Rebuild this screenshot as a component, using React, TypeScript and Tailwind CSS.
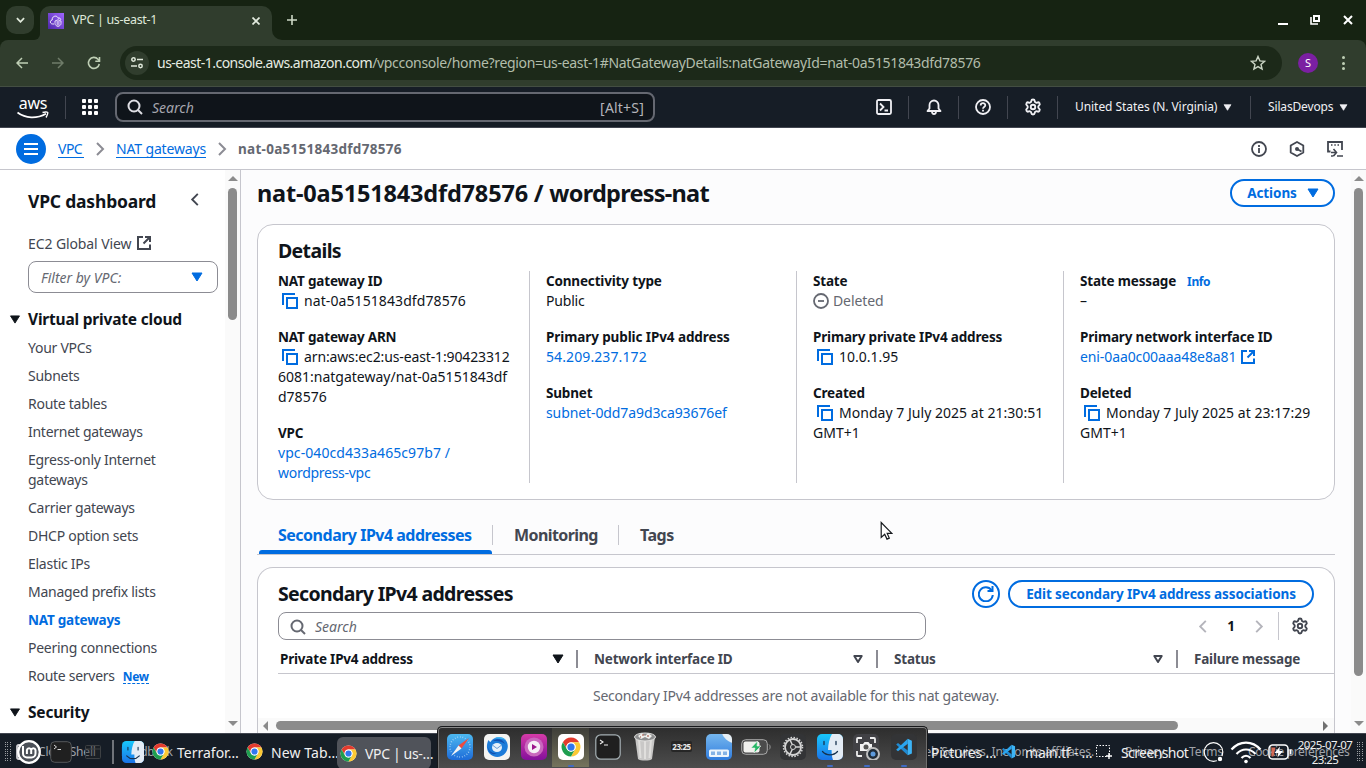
import type { ReactNode } from 'react';
import { Settings } from 'lucide-react';

type IconProps = { className?: string };

const Copy = () => (
  <svg viewBox="0 0 16 16" className="ml-1 mr-1.5 inline-block h-4 w-4 align-[-3px]" fill="none" stroke="#006ce0" strokeWidth="2">
    <path d="M1 12V1h12" />
    <path d="M5 5h10v10H5z" />
  </svg>
);

const External = ({ className = '' }: IconProps) => (
  <svg viewBox="0 0 16 16" className={`h-4 w-4 shrink-0 ${className}`} fill="none" stroke="currentColor" strokeWidth="2">
    <path d="M7 2H2v12h12V9.500" />
    <path d="M9 2h5v5M14 2 7.500 8.500" />
  </svg>
);

const Magnifier = ({ className = '' }: IconProps) => (
  <svg viewBox="0 0 16 16" className={`h-4 w-4 shrink-0 ${className}`} fill="none" stroke="currentColor" strokeWidth="2">
    <circle cx="7" cy="7" r="5.500" />
    <path d="m11 11 4 4" />
  </svg>
);

const Chevron = ({ className = '' }: IconProps) => (
  <svg viewBox="0 0 10 16" className={`shrink-0 ${className}`} fill="none" stroke="currentColor" strokeWidth="2">
    <path d="m2 2 6 6-6 6" />
  </svg>
);

const Caret = ({ className = '' }: IconProps) => (
  <svg viewBox="0 0 12 10" className={`shrink-0 ${className}`} fill="currentColor" stroke="currentColor" strokeWidth="1" strokeLinejoin="round">
    <path d="M1 1h10L6 9z" />
  </svg>
);

const SortIcon = ({ className = '' }: IconProps) => (
  <svg viewBox="0 0 12 10" className={`h-[10px] w-3 shrink-0 ${className}`} fill="none" stroke="#424650" strokeWidth="2" strokeLinejoin="round">
    <path d="M2.300 2h7.400L6 8z" />
  </svg>
);

const ChromeLogo = ({ className = '' }: IconProps) => (
  <svg viewBox="0 0 32 32" className={`shrink-0 ${className}`}>
    <circle cx="16" cy="16" r="15" fill="#fff" />
    <path d="M3 8.500A15 15 0 0 1 29 8.500H16a7.500 7.500 0 0 0-6.500 11.200z" fill="#e33b2e" />
    <path d="M29 8.500A15 15 0 0 1 16 31l6.500-11.200A7.500 7.500 0 0 0 16 8.500z" fill="#fcc934" />
    <path d="M16 31A15 15 0 0 1 3 8.500l6.500 11.200a7.500 7.500 0 0 0 13 0z" fill="#1e9e4f" />
    <circle cx="16" cy="16" r="7.400" fill="#fff" />
    <circle cx="16" cy="16" r="5.800" fill="#3177ee" />
  </svg>
);

const FinderLogo = ({ className = '' }: IconProps) => (
  <svg viewBox="0 0 26 26" className={`shrink-0 ${className}`}>
    <defs>
      <linearGradient id="finderLeft" x1="0" x2="0" y1="0" y2="1">
        <stop offset="0" stopColor="#18c8fb" />
        <stop offset="1" stopColor="#1b73e8" />
      </linearGradient>
    </defs>
    <rect width="26" height="26" rx="5" fill="url(#finderLeft)" />
    <path d="M15 0h6a5 5 0 0 1 5 5v16a5 5 0 0 1-5 5h-5c-1-3-1.400-6-1.400-10H11C11.200 10 12.500 4 15 0z" fill="#e4ecf5" />
    <path d="M7 7.500v3M19 7.500v3M5.500 17.500c4 4.500 11 4.500 15 0" fill="none" stroke="#16324f" strokeWidth="1.300" strokeLinecap="round" />
  </svg>
);

const CodeLogo = ({ className = '' }: IconProps) => (
  <svg viewBox="0 0 24 24" className={`shrink-0 ${className}`}>
    <path d="M17 1v22L1.500 8.500 4 6.500 17 16.500" fill="#1f8ad2" />
    <path d="M17 1 1.500 15.500 4 17.500 17 7.500z" fill="#2aa5ee" />
    <path d="M17 1l5.500 2.500v17L17 23z" fill="#3cb4f6" />
  </svg>
);

const Grip = () => (
  <span className="grid h-[19px] w-[6px] shrink-0 grid-cols-3 gap-[1px]">
    {Array.from({ length: 27 }, (_, i) => (
      <span key={i} className="h-px w-px bg-[#9a9da1]" />
    ))}
  </span>
);

const Label = ({ children }: { children: ReactNode }) => (
  <div className="h-5 whitespace-nowrap text-[13.5px] font-bold leading-5 tracking-[-0.17px]">{children}</div>
);

function TabStrip() {
  return (
    <div className="flex h-10 items-center bg-[#162312] pl-1.5">
      <div className="flex h-7 w-7 items-center justify-center rounded-[10px] bg-[#303d2d]">
        <svg viewBox="0 0 10 6" className="h-[6px] w-[9px]" fill="none" stroke="#dfe8da" strokeWidth="2"><path d="m1 1 4 4 4-4" /></svg>
      </div>
      <div className="mt-1.5 h-[34px] w-1.5 self-start bg-[#303d2d]">
        <div className="h-full w-full rounded-br-[8px] bg-[#162312]" />
      </div>
      <div className="mt-1.5 flex h-[34px] w-[232px] items-center self-start rounded-t-[10px] bg-[#303d2d] pb-[5px] pl-2">
        <svg viewBox="0 0 16 16" className="h-4 w-4">
          <defs><linearGradient id="fav" x1="0" x2="1" y1="1" y2="0"><stop stopColor="#4d27a8" /><stop offset="1" stopColor="#a166ff" /></linearGradient></defs>
          <rect width="16" height="16" fill="url(#fav)" />
          <path d="M6 11H4.700C1.700 11 1.700 7.200 4.200 7 3.800 2.500 9.500 2 10 5.200c1.600-.6 2.800.2 2.800 1.600" fill="none" stroke="#fff" strokeWidth=".9" />
          <path d="M10 6.800 13 8v2.500c0 1.400-1 2.200-3 3-2-.8-3-1.600-3-3V8zM9.200 8v4.500M10.900 8v4.500" fill="none" stroke="#fff" strokeWidth=".8" />
        </svg>
        <span className="ml-2 whitespace-nowrap text-[12.5px] tracking-[-0.32px] text-[#dfe8da]">VPC | us-east-1</span>
        <svg viewBox="0 0 8 8" className="ml-[95px] h-2 w-2" stroke="#e3ebdf" strokeWidth="1.700"><path d="m.5.5 7 7m0-7-7 7" /></svg>
      </div>
      <div className="mt-1.5 h-[34px] w-[10px] self-start bg-[#303d2d]"><div className="h-full w-full rounded-bl-[10px] bg-[#162312]" /></div>
      <svg viewBox="0 0 10 10" className="ml-[5px] h-[10px] w-[10px]" stroke="#cdd9c6" strokeWidth="1.600"><path d="M5 0v10M0 5h10" /></svg>
      <div className="ml-auto flex items-center gap-[23px] pr-[13px]">
        <span className="-mr-px mt-[7px] h-[2px] w-[10px] bg-white" />
        <svg viewBox="0 0 10 10" className="h-[10px] w-[10px]" fill="none" stroke="#fff" strokeWidth="2"><path d="M4 1h5v5H4z" /><path d="M1 2v7h7" strokeWidth="1.600" /></svg>
        <svg viewBox="0 0 10 10" className="h-[10px] w-[10px]" stroke="#fff" strokeWidth="2"><path d="m1 1 8 8m0-8-8 8" /></svg>
      </div>
    </div>
  );
}

function AddressBar() {
  return (
    <div className="h-[47px] bg-[#162312]">
      <div className="flex h-full items-center rounded-t-[8px] border-b border-[#434e42] bg-[#303d2d] pl-4">
        <svg viewBox="0 0 12 12" className="h-3 w-3" fill="none" stroke="#bfcfb5" strokeWidth="1.500"><path d="M12 6H1m5-5L1 6l5 5" /></svg>
        <svg viewBox="0 0 12 12" className="ml-6 h-3 w-3" fill="none" stroke="#6f7c69" strokeWidth="1.500"><path d="M0 6h11M6 1l5 5-5 5" /></svg>
        <svg viewBox="0 0 14 14" className="ml-[23px] h-[14px] w-[14px]" fill="none" stroke="#bfcfb5" strokeWidth="1.600"><path d="M12.300 8A5.500 5.500 0 1 1 11 3.200L12.500 5" /><path d="M12.500 1v4.300H8.300" /></svg>
        <div className="ml-[19px] flex h-[34px] w-[1162px] items-center rounded-full bg-[#1c2919] pl-[5px]">
          <div className="flex h-6 w-6 items-center justify-center rounded-full bg-[#303d2d]">
            <svg viewBox="0 0 12 12" className="h-3 w-3" fill="none" stroke="#dfe8da" strokeWidth="1.500"><circle cx="2.500" cy="2.500" r="1.700" /><path d="M6 2.500h6M0 9h6" /><circle cx="9.500" cy="9" r="1.700" /></svg>
          </div>
          <div className="ml-2 whitespace-nowrap pb-[2px] text-[14px]">
            <span className="tracking-[-0.52px] text-[#e6ece2]">us-east-1.console.aws.amazon.com</span>
            <span className="tracking-[-0.32px] text-[#b2bdab]">/vpcconsole/home?region=us-east-1#NatGatewayDetails:natGatewayId=nat-0a5151843dfd78576</span>
          </div>
          <svg viewBox="0 0 16 16" className="ml-auto mr-4 h-4 w-4" fill="none" stroke="#cbd5c5" strokeWidth="1.400"><path d="m8 1.500 1.900 4.400 4.700.4-3.600 3.100 1.100 4.700L8 11.600l-4.100 2.500L5 9.400 1.400 6.300l4.700-.4z" /></svg>
        </div>
        <span className="ml-4 flex h-5 w-5 items-center justify-center rounded-full bg-[#7b1fa2] text-[11px] text-white">S</span>
        <div className="ml-[24px] flex flex-col gap-[2.500px]">
          <span className="h-[3px] w-[3px] rounded-full bg-[#bfcfb5]" /><span className="h-[3px] w-[3px] rounded-full bg-[#bfcfb5]" /><span className="h-[3px] w-[3px] rounded-full bg-[#bfcfb5]" />
        </div>
      </div>
    </div>
  );
}

function ConsoleNav() {
  return (
    <div className="flex h-[41px] items-center border-b border-[#424650] bg-[#161d26] text-[#f0f0f4]">
      <div className="ml-[17px] flex w-[32px] flex-col items-center pt-0.5">
        <span className="text-[16px] leading-[11px] tracking-[-0.2px] text-white">aws</span>
        <svg viewBox="0 0 32 8" className="mt-[2px] h-2 w-8" fill="none" stroke="#fff" strokeWidth="1.700"><path d="M.5 1.500c8 6 19 6.500 28.500 1.200" /><path d="M25.500 1.500c2.500-.8 5.500-.8 5.300.5-.2 1.500-.8 3-1.800 4.500" strokeWidth="1.400" /></svg>
      </div>
      <span className="ml-4 h-[23px] w-px bg-[#424650]" />
      <div className="ml-4 grid grid-cols-3 gap-[2px]">
        {Array.from({ length: 9 }, (_, i) => <span key={i} className="h-[4px] w-[4px] rounded-[1px] bg-white" />)}
      </div>
      <div className="ml-[17px] flex h-[30px] w-[540px] items-center rounded-[8px] border-2 border-[#656871] bg-[#0f141a] pl-[10px] pr-[9px]">
        <Magnifier className="text-[#dedee3]" />
        <span className="ml-[9px] text-[14px] italic text-[#a4a4ad]">Search</span>
        <span className="ml-auto text-[14px] tracking-[0.2px] text-[#b4b4bb]">[Alt+S]</span>
      </div>
      <svg viewBox="0 0 16 16" className="ml-[221px] h-4 w-4" fill="none" stroke="currentColor" strokeWidth="1.800"><rect x="1" y="1" width="14" height="14" rx="1.500" /><path d="m4 4.500 3.500 3.500L4 11.500M8.500 11.500H12" /></svg>
      <span className="ml-4 flex h-[23px] w-[50px] items-center justify-center border-l border-[#424650]">
        <svg viewBox="0 0 16 16" className="h-4 w-4" fill="none" stroke="currentColor" strokeWidth="1.800"><path d="M1.500 12h13L12.500 9.500V6a4.500 4.500 0 0 0-9 0v3.500zM6 12.500c0 3.300 4 3.300 4 0" strokeLinejoin="round" /></svg>
      </span>
      <span className="flex h-[23px] w-[49px] items-center justify-center border-l border-[#424650]">
        <svg viewBox="0 0 16 16" className="h-4 w-4" fill="none" stroke="currentColor" strokeWidth="1.800"><circle cx="8" cy="8" r="7" /><path d="M5.700 6.500c0-3 4.600-3 4.600-.3C10.300 8 8 8 8 9.700M8 10.700v1.700" /></svg>
      </span>
      <span className="flex h-[23px] w-[50px] items-center justify-center border-l border-[#424650]">
        <Settings size={18} strokeWidth={2.500} />
      </span>
      <span className="flex h-[23px] w-[193px] items-center border-l border-[#424650] pl-[17px] text-[12px] tracking-[-0.06px]">
        <span className="whitespace-nowrap">United States (N. Virginia)</span><Caret className="ml-[6px] h-[7px] w-[9px]" />
      </span>
      <span className="flex h-[23px] items-center border-l border-[#424650] pl-[17px] text-[12px] tracking-[-0.15px]">
        SilasDevops<Caret className="ml-[6px] h-[7px] w-[9px]" />
      </span>
    </div>
  );
}

function Breadcrumbs() {
  return (
    <div className="flex h-[42px] items-center border-b border-[#c6c6cd] bg-white pl-4 pr-[23px] text-[14px]">
      <span className="flex h-[30px] w-[30px] flex-col items-center justify-center gap-[3px] rounded-full bg-[#006ce0]">
        <span className="h-[2px] w-[14px] bg-white" /><span className="h-[2px] w-[14px] bg-white" /><span className="h-[2px] w-[14px] bg-white" />
      </span>
      <span className="ml-3 w-[26px] border-b border-[#006ce0] leading-[17px] tracking-[-0.5px] text-[#006ce0]">VPC</span>
      <Chevron className="ml-[11px] h-4 w-[10px] text-[#8c8c94]" />
      <span className="ml-[11px] w-[90px] whitespace-nowrap border-b border-[#006ce0] leading-[17px] tracking-[-0.15px] text-[#006ce0]">NAT gateways</span>
      <Chevron className="ml-[11px] h-4 w-[10px] text-[#8c8c94]" />
      <span className="ml-[11px] pt-px text-[13.500px] font-bold tracking-[0.28px] text-[#656871]">nat-0a5151843dfd78576</span>
      <div className="ml-auto flex items-center gap-[22px] text-[#424650]">
        <svg viewBox="0 0 16 16" className="h-4 w-4" fill="none" stroke="currentColor" strokeWidth="1.800"><circle cx="8" cy="8" r="7" /><path d="M8 7v5M8 4v2" /></svg>
        <svg viewBox="0 0 16 16" className="h-4 w-4" fill="none" stroke="currentColor" strokeWidth="1.800"><path d="m8 1 6.300 3.500v7L8 15l-6.300-3.500v-7z" strokeLinejoin="round" /><circle cx="8" cy="8" r="2" fill="currentColor" stroke="none" /><path d="m8 8 4.500 2.500" /></svg>
        <svg viewBox="0 0 16 16" className="h-4 w-4" fill="none" stroke="currentColor" strokeWidth="1.800"><path d="M3.500 10.500H1V1h14v8" /><path d="M4 4h1.500M7.300 4h1.500M10.500 4H12M10 15h6M4 15h1.500q1 0 1.500-1" strokeWidth="1.600" /><path d="M4 11.500h5m-2.500-3.500 3 3.500-3 3.500" strokeWidth="1.600" /></svg>
      </div>
    </div>
  );
}

const cloudLinks = ['Your VPCs', 'Subnets', 'Route tables', 'Internet gateways', 'Egress-only Internet gateways', 'Carrier gateways', 'DHCP option sets', 'Elastic IPs', 'Managed prefix lists', 'NAT gateways', 'Peering connections'];

const SectionTitle = ({ children, className = '' }: { children: ReactNode; className?: string }) => (
  <div className={`flex h-5 items-center pl-[9px] pt-px text-[15.500px] font-bold tracking-[-0.2px] text-[#0f141a] ${className}`}>
    <Caret className="mr-[7px] h-[9px] w-3" />{children}
  </div>
);

function Sidebar() {
  return (
    <aside className="flex w-[241px] shrink-0 border-r border-[#c6c6cd] bg-white">
      <div className="h-[563px] w-[225px] overflow-hidden pt-[19px] text-[14px] tracking-[-0.27px] text-[#424650]">
        <div className="flex h-6 items-center pl-7 pr-[25px] text-[#0f141a]">
          <span className="text-[17.500px] font-bold tracking-[-0.2px]">VPC dashboard</span>
          <Chevron className="mb-[3px] ml-auto h-[15px] w-[10px] rotate-180 text-[#424650]" />
        </div>
        <div className="mt-5 flex h-5 items-center pl-7 tracking-[-0.1px]">EC2 Global View<External className="ml-[5px]" /></div>
        <div className="ml-7 mt-2 flex h-8 w-[190px] items-center rounded-[8px] border border-[#8c8c94] pl-3 pr-[14px]">
          <span className="italic tracking-[0px] text-[#656871]">Filter by VPC:</span>
          <Caret className="ml-auto h-[10px] w-3 text-[#006ce0]" />
        </div>
        <SectionTitle className="mt-4">Virtual private cloud</SectionTitle>
        <ul className="mt-[9px] flex flex-col gap-2 pl-7 leading-5">
          {cloudLinks.map((name) => (
            <li key={name} className={name === 'NAT gateways' ? 'text-[13.5px] font-bold tracking-[-0.22px] text-[#006ce0]' : 'w-[150px]'}>{name}</li>
          ))}
          <li className="flex">Route servers<span className="ml-2 h-[18px] border-b border-dashed border-[#006ce0] text-[12px] font-bold leading-[21px] tracking-[-0.35px] text-[#006ce0]">New</span></li>
        </ul>
        <SectionTitle className="mt-4">Security</SectionTitle>
      </div>
      <VerticalScrollbar short />
    </aside>
  );
}

function VerticalScrollbar({ short = false }: { short?: boolean }) {
  return (
    <div className="flex h-full w-[15px] shrink-0 flex-col items-center bg-[#fafafa] pt-[6px]">
      <svg viewBox="0 0 10 5" className="h-[5px] w-[10px]" fill="#8b8b8b"><path d="M0 5 5 0l5 5z" /></svg>
      <span className={`mt-[7px] w-[9px] rounded-full bg-[#8b8b8b] ${short ? 'h-[132px]' : 'h-[488px]'}`} />
      <svg viewBox="0 0 10 5" className="mb-[7px] mt-auto h-[5px] w-[10px]" fill="#8b8b8b"><path d="m0 0 5 5 5-5z" /></svg>
    </div>
  );
}

function Details() {
  return (
    <section className="mt-[17px] h-[276px] rounded-[16px] border border-[#c6c6cd] bg-white px-5 pt-[13px]">
      <h2 className="pt-px text-[19.500px] font-bold leading-6 tracking-[-0.65px]">Details</h2>
      <div className="mt-[8px] flex h-[212px] text-[14px] leading-5">
        <div className="flex w-[251px] flex-col gap-4">
          <div><Label>NAT gateway ID</Label><div className="tracking-[0.09px]"><Copy />nat-0a5151843dfd78576</div></div>
          <div><Label>NAT gateway ARN</Label><div className="whitespace-nowrap"><span className="tracking-[-0.13px]"><Copy />arn:aws:ec2:us-east-1:90423312</span><br /><span className="tracking-[0px]">6081:natgateway/nat-0a5151843df</span><br />d78576</div></div>
          <div><Label>VPC</Label><div className="text-[#006ce0]"><span className="tracking-[0.07px]">vpc-040cd433a465c97b7 /</span><br /><span className="tracking-[-0.28px]">wordpress-vpc</span></div></div>
        </div>
        <div className="flex w-[267px] flex-col gap-4 border-l border-[#c6c6cd] pl-4">
          <div><Label>Connectivity type</Label><div className="tracking-[-0.2px]">Public</div></div>
          <div><Label><span className="tracking-[-0.1px]">Primary public IPv4 address</span></Label><div className="tracking-[0.1px] text-[#006ce0]">54.209.237.172</div></div>
          <div><Label>Subnet</Label><div className="tracking-[-0.1px] text-[#006ce0]">subnet-0dd7a9d3ca93676ef</div></div>
        </div>
        <div className="flex w-[267px] flex-col gap-4 border-l border-[#c6c6cd] pl-4">
          <div><Label>State</Label><div className="flex items-center tracking-[-0.1px] text-[#656871]">
            <svg viewBox="0 0 16 16" className="mr-1 h-4 w-4" fill="none" stroke="currentColor" strokeWidth="1.800"><circle cx="8" cy="8" r="7" /><path d="M5 8h6" /></svg>Deleted
          </div></div>
          <div><Label>Primary private IPv4 address</Label><div><Copy />10.0.1.95</div></div>
          <div><Label>Created</Label><div className="whitespace-nowrap tracking-[0.03px]"><Copy />Monday 7 July 2025 at 21:30:51<br />GMT+1</div></div>
        </div>
        <div className="flex w-[251px] flex-col gap-4 border-l border-[#c6c6cd] pl-4">
          <div><Label>State message<span className="ml-[11px] text-[12px] tracking-[-0.35px] text-[#006ce0]">Info</span></Label><div>–</div></div>
          <div><Label>Primary network interface ID</Label><div className="flex items-center tracking-[-0.1px] text-[#006ce0]">eni-0aa0c00aaa48e8a81<External className="ml-1" /></div></div>
          <div><Label>Deleted</Label><div className="whitespace-nowrap tracking-[0.03px]"><Copy />Monday 7 July 2025 at 23:17:29<br />GMT+1</div></div>
        </div>
      </div>
    </section>
  );
}

function Addresses() {
  return (
    <section className="mt-3 flex h-[170px] flex-col overflow-hidden rounded-t-[16px] border border-b-0 border-[#c6c6cd] bg-white">
      <div className="mx-5 mt-3 flex h-7 items-center">
        <h2 className="text-[19.500px] font-bold leading-6 tracking-[-0.66px]">Secondary IPv4 addresses</h2>
        <span className="ml-auto flex h-7 w-7 items-center justify-center rounded-full border-2 border-[#006ce0]">
          <svg viewBox="0 0 16 16" className="h-4 w-4" fill="none" stroke="#006ce0" strokeWidth="2"><path d="M14.800 9A7 7 0 1 1 13.500 4.200" /><path d="M14.500 0v5H9.500" /></svg>
        </span>
        <span className="ml-2 flex h-7 w-[306px] items-center justify-center whitespace-nowrap rounded-full border-2 border-[#006ce0] text-[13.500px] font-bold tracking-[-0.11px] text-[#006ce0]">Edit secondary IPv4 address associations</span>
      </div>
      <div className="mx-5 mt-1 flex h-7 items-center">
        <div className="flex h-7 w-[648px] items-center rounded-[8px] border border-[#8c8c94] pl-[11px] pt-px text-[14px] italic text-[#656871]"><Magnifier className="mr-[9px]" />Search</div>
        <Chevron className="ml-auto h-[15px] w-[10px] rotate-180 text-[#b4b4bb]" />
        <span className="w-[46px] text-center text-[13.500px] font-bold">1</span>
        <Chevron className="h-[15px] w-[10px] text-[#b4b4bb]" />
        <span className="ml-[14px] h-7 w-px bg-[#c6c6cd]" />
        <Settings size={18} strokeWidth={2.500} className="ml-3 mr-[5px] text-[#424650]" />
      </div>
      <div className="ml-5 mt-[5px] flex h-[29px] items-center border-b border-[#c6c6cd] text-[13.500px] font-bold tracking-[-0.2px] text-[#424650]">
        <div className="flex w-[298px] items-center pl-[2px] pr-3 text-[#0f141a]">Private IPv4 address<Caret className="ml-auto h-[10px] w-3" /></div>
        <div className="flex h-[18px] w-[300px] items-center border-l-2 border-[#8c8c94] pl-4 pr-3">Network interface ID<SortIcon className="ml-auto" /></div>
        <div className="flex h-[18px] w-[300px] items-center border-l-2 border-[#8c8c94] pl-4 pr-3">Status<SortIcon className="ml-auto" /></div>
        <div className="flex h-[18px] items-center border-l-2 border-[#8c8c94] pl-4">Failure message</div>
      </div>
      <p className="mt-[12px] text-center text-[14px] leading-5 tracking-[-0.23px] text-[#656871]">Secondary IPv4 addresses are not available for this nat gateway.</p>
      <div className="mt-[12px] flex h-[15px] shrink-0 items-center bg-[#fafafa] pl-[5px] pr-[6px]">
        <svg viewBox="0 0 5 10" className="h-[10px] w-[5px]" fill="#8b8b8b"><path d="M5 0 0 5l5 5z" /></svg>
        <span className="ml-2 h-[9px] w-[902px] rounded-full bg-[#8b8b8b]" />
        <svg viewBox="0 0 5 10" className="ml-auto h-[10px] w-[5px]" fill="#707070"><path d="m0 0 5 5-5 5z" /></svg>
      </div>
    </section>
  );
}

function Main() {
  return (
    <main className="flex h-full min-w-0 flex-1 bg-[#fcfcfd]">
      <div className="h-full w-[1094px] overflow-hidden pl-4 pt-[9px]">
        <div className="flex h-7 items-center">
          <h1 className="whitespace-nowrap pt-[2px] text-[23.500px] font-bold"><span className="tracking-[-0.18px]">nat-0a5151843dfd78576 / </span><span className="tracking-[-0.75px]">wordpress-nat</span></h1>
          <span className="ml-auto flex h-7 w-[105px] items-center justify-center rounded-full border-2 border-[#006ce0] bg-white pl-px text-[13.500px] font-bold tracking-[-0.1px] text-[#006ce0]">Actions<Caret className="ml-2.5 h-[10px] w-3" /></span>
        </div>
        <Details />
        <div className="mt-[17px] flex h-[38px] items-start border-b border-[#c6c6cd] pl-[2px] text-[16px] font-bold tracking-[-0.5px] text-[#424650]">
          <span className="flex h-[37px] w-[234px] flex-col justify-between text-[#006ce0]">
            <span className="mt-[8px] w-full border-r border-[#c6c6cd] pl-[19px] leading-5">Secondary IPv4 addresses</span>
            <span className="h-1 w-[233px] rounded-t-[3px] bg-[#006ce0]" />
          </span>
          <span className="mt-[8px] w-[126px] border-r border-[#c6c6cd] pl-[21px] leading-5 tracking-[-0.58px]">Monitoring</span>
          <span className="mt-[8px] pl-[21px] leading-5">Tags</span>
        </div>
        <Addresses />
      </div>
      <span className="flex-1" />
      <VerticalScrollbar />
    </main>
  );
}

function Footer() {
  return (
    <footer className="flex h-[35px] items-center border-t border-[#424650] bg-[#161d26] pt-px text-[12px] tracking-[-0.2px] text-[#a0a3a9]">
      <svg viewBox="0 0 16 16" className="ml-4 h-4 w-4 text-[#d0d0d4]" fill="none" stroke="currentColor" strokeWidth="1.800"><rect x="1" y="1" width="14" height="14" rx="1.500" /><path d="m4 4.500 3.500 3.500L4 11.500M8.500 11.500H12" /></svg>
      <span className="ml-1.5 w-[83px]">CloudShell</span>
      <span>Feedback</span>
      <span className="ml-auto w-[290px] whitespace-nowrap text-right tracking-[-0.17px]">© 2025, Amazon Web Services, Inc. or its affiliates.</span>
      <span className="ml-[31px] w-[64px] tracking-[-0.05px]">Privacy</span>
      <span className="w-[59px] tracking-[-0.1px]">Terms</span>
      <span className="w-[118px] whitespace-nowrap tracking-[-0.4px]">Cookie preferences</span>
    </footer>
  );
}

function Taskbar() {
  return (
    <div className="absolute inset-x-0 bottom-0 flex h-[33px] items-center overflow-hidden text-[14px] text-[#f0f0f0]">
      <span className="ml-[5px] flex"><Grip /></span>
      <svg viewBox="0 0 24 24" className="ml-[6px] h-6 w-6" fill="none" stroke="#fff"><circle cx="12" cy="12" r="10.800" strokeWidth="2.200" fill="#4b5058" /><path d="M6 6v7.500a4 4 0 0 0 4 4h4.500a4 4 0 0 0 4-4V10a2.200 2.200 0 0 0-4.300 0v4M14.200 10a2.200 2.200 0 0 0-4.300 0v4" strokeWidth="2" /></svg>
      <svg viewBox="0 0 22 22" className="ml-[9px] h-[22px] w-[22px]"><rect x=".7" y=".7" width="20.600" height="20.600" rx="4" fill="#202020" stroke="#55585a" /><path d="m4 4 2.500 2L4 8M7.500 8.500h3.500" fill="none" stroke="#eee" strokeWidth=".9" /></svg>
      <svg viewBox="0 0 16 14" className="ml-[13px] h-[14px] w-4" fill="#202326" fillOpacity=".4" stroke="#3d4043"><rect x=".5" y=".5" width="15" height="13" rx="1" /><path d="M.5 4h15" /></svg>
      <span className="ml-[11px] h-6 w-[2px] bg-[#70747a]" />
      <FinderLogo className="ml-[8px] h-[22px] w-[22px]" />
      <ChromeLogo className="ml-2 h-[17px] w-[17px]" />
      <span className="ml-2 w-[69px] whitespace-nowrap pt-[2px]">Terrafor…</span>
      <ChromeLogo className="h-[17px] w-[17px]" />
      <span className="ml-2 w-[66px] whitespace-nowrap pt-[2px] tracking-[0.1px]">New Tab…</span>
      <span className="mt-[3px] flex h-[32px] w-[94px] items-center rounded-[6px] bg-[#50535a] pl-[3px]">
        <ChromeLogo className="h-[17px] w-[17px]" /><span className="ml-2 whitespace-nowrap tracking-[-0.35px]">VPC | us-…</span>
      </span>
      <span className="ml-[500px] w-[70px] whitespace-nowrap pt-[2px] tracking-[-0.2px]">Pictures …</span>
      <CodeLogo className="h-[15px] w-[15px]" />
      <span className="ml-[9px] w-[71px] whitespace-nowrap pt-[2px] tracking-[-0.2px]">main.tf - …</span>
      <svg viewBox="0 0 16 14" className="h-[14px] w-4" fill="none" stroke="#fff"><path d="M.5.500h13v11H.5z" strokeDasharray="1.500 1.500" /><path d="M13 8v6M10 11h6" strokeWidth="1.400" /></svg>
      <span className="ml-[9px] w-[82px] pt-[2px] tracking-[-0.6px]">Screenshot</span>
      <svg viewBox="0 0 22 22" className="h-[22px] w-[22px]" fill="none" stroke="#fff" strokeWidth="1.200"><circle cx="10.500" cy="11" r="9.300" /><circle cx="17" cy="18" r="2.800" fill="#fff" stroke="#161d26" /></svg>
      <svg viewBox="0 0 32 24" className="ml-[5px] h-6 w-8" fill="none" stroke="#fff" strokeWidth="2.200"><path d="M1.500 9.500c8-9.300 21-9.300 29 0M6.500 14c5.500-6 13.500-6 19 0M11.500 18c2.700-3 6.300-3 9 0" /><circle cx="16" cy="21.500" r="1.800" fill="#fff" stroke="none" /></svg>
      <svg viewBox="0 0 24 16" className="ml-[6px] h-4 w-6" fill="none" stroke="#fff" strokeWidth="1.500"><rect x="1" y="1" width="19" height="14" rx="3.500" /><path d="M3.500 3.500h4l-2 9h-2z" fill="#d46a55" stroke="none" /><path d="M12 2.500 6.500 9h3.800L9.500 13.500 15 7h-3.800z" fill="#fff" stroke="none" /><path d="M22.500 5.500v5" strokeWidth="2" /></svg>
      <span className="ml-[5px] w-[56px] pt-px text-center text-[11.500px] leading-[15px] tracking-[-0.55px]">2025-07-07<br />23:25</span>
      <span className="ml-1 flex"><Grip /></span>
    </div>
  );
}

const Cell = ({ children, active = false, className = 'pt-[6px]' }: { children: ReactNode; active?: boolean; className?: string }) => (
  <span className={`flex h-[39px] w-[37px] shrink-0 flex-col items-center ${active ? 'bg-gradient-to-b from-[#3e3e38] to-[#75735c]' : ''} ${className}`}>{children}</span>
);

const Dot = () => <span className="mt-[5px] h-[2px] w-1.5 rounded-full bg-[#416bc4]" />;

function Dock() {
  return (
    <div className="absolute bottom-0 left-[437px] flex h-[42px] w-[491px] rounded-t-[5px] border border-b-0 border-[#18191b] bg-gradient-to-b from-[#2d2d2d] to-[#4d4d4d] pl-[3px] pt-[1px] shadow-[inset_0_1px_0_#8a8a8a,inset_1px_0_0_#707070,inset_-1px_0_0_#707070]">
      <Cell>
        <svg viewBox="0 0 26 26" className="h-[26px] w-[26px]"><defs><linearGradient id="saf" x1="0" x2="0" y1="0" y2="1"><stop stopColor="#4db9f0" /><stop offset="1" stopColor="#1d6bd8" /></linearGradient></defs><rect width="26" height="26" rx="5" fill="url(#saf)" /><circle cx="13" cy="13" r="10" fill="none" stroke="#bfe0fa" strokeWidth="1.500" strokeDasharray=".6 2" /><path d="M22 4 11.500 11.500l3 3z" fill="#ee4b3e" /><path d="m4 22 7.500-10.500 3 3z" fill="#f4f4f4" /></svg>
      </Cell>
      <Cell>
        <svg viewBox="0 0 26 26" className="h-[26px] w-[26px]"><rect width="26" height="26" rx="5" fill="#f4f4f2" /><path d="M4.500 6c.5 1 1.200 1.500 2 2C9 3 17 1.500 21 5.500c4 4 3.500 10 0 14-4 4.500-11.500 4.500-15.500 0C2 15.500 2.500 10 4.500 6z" fill="#1c7bd9" /><path d="M9 7c4-3 10-2 12 3-3-2.500-7-3-12-3z" fill="#124fae" /><path d="M3.500 12c1 5 5 8 10 7-5 3-9 0-10-7z" fill="#124fae" /><ellipse cx="13" cy="13.500" rx="5" ry="4.500" fill="#e6f0fa" /><path d="m9 11.500 4 3 4-3" stroke="#6b9cd4" fill="none" /><path d="M10 4.500C13 2 19 2.500 22 6c-4-1.500-8-1.500-12-1.500z" fill="#42b4f2" /></svg>
      </Cell>
      <Cell>
        <svg viewBox="0 0 26 26" className="h-[26px] w-[26px]"><defs><linearGradient id="mus" x1="0" x2="0" y1="0" y2="1"><stop stopColor="#d43ba8" /><stop offset="1" stopColor="#84109b" /></linearGradient></defs><rect width="26" height="26" rx="5" fill="url(#mus)" /><circle cx="13" cy="13" r="9.500" fill="#c967bd" /><circle cx="13" cy="13" r="6.200" fill="#f6eff6" /><path d="m11 10 5 3-5 3z" fill="#9d168c" /></svg>
      </Cell>
      <Cell active>
        <span className="flex h-[26px] w-[26px] items-center justify-center rounded-[5px] bg-white"><ChromeLogo className="h-5 w-5" /></span><Dot />
      </Cell>
      <Cell>
        <svg viewBox="0 0 26 26" className="h-[26px] w-[26px]"><rect x=".8" y=".8" width="24.400" height="24.400" rx="5" fill="#1f1f1f" stroke="#a5b0b4" strokeWidth="1.200" /><path d="M5 6l3 2-3 2M9 11h4" fill="none" stroke="#eee" strokeWidth="1.100" /></svg>
      </Cell>
      <Cell className="pt-[3px]">
        <svg viewBox="0 0 24 30" className="h-[30px] w-6"><path d="m2 6 3 22c2 2 12 2 14 0l3-22z" fill="#c9c8c7" /><path d="m6 8 1.500 19M12 9v19M18 8l-1.500 19" stroke="#e0dfdd" strokeWidth="2" /><ellipse cx="12" cy="6" rx="10.500" ry="4" fill="#8d8e8f" stroke="#e1e1df" /><path d="m5 5 4-3 3 3 3-3 4 3-3 3-4-2-4 2z" fill="#efefec" /><path d="M9 4h2M14 5h2M7 6h1" stroke="#984639" /></svg>
      </Cell>
      <Cell><span className="mt-[7px] rounded-[2px] bg-[#262626] px-px text-[8px] font-bold leading-[11px] tracking-[-0.4px] text-[#ececec]">23:25</span></Cell>
      <Cell>
        <svg viewBox="0 0 26 26" className="h-[26px] w-[26px]"><defs><linearGradient id="win" x1="0" x2="0" y1="0" y2="1"><stop stopColor="#76b7ee" /><stop offset="1" stopColor="#317dde" /></linearGradient></defs><path d="M5 0h11l10 9v12a5 5 0 0 1-5 5H5a5 5 0 0 1-5-5V5a5 5 0 0 1 5-5z" fill="url(#win)" /><path d="M16 0c2 4 5 7 10 9V5a5 5 0 0 0-5-5z" fill="#e6eff5" /><rect x="3" y="15.500" width="20" height="7.500" rx="1.500" fill="#eef5fc" /><path d="M5 17.500h4v3.500H5zM11 17.500h4v3.500h-4zM17 17.500h4v3.500h-4z" fill="#85b3e6" /></svg>
      </Cell>
      <Cell>
        <svg viewBox="0 0 30 16" className="mt-[5px] h-4 w-[30px]"><rect x=".7" y=".7" width="25.600" height="14.600" rx="4" fill="#4b4b4b" stroke="#aaa" /><rect x="2.500" y="2.500" width="16" height="11" rx="2" fill="#f0f0ed" /><path d="M28 5.500c1.500 1 1.500 4 0 5" fill="none" stroke="#999" /><path d="M16.500 2 10 9h4l-1 5 7-7h-4z" fill="#26b765" stroke="#f0f0ed" strokeWidth=".6" /></svg>
      </Cell>
      <Cell>
        <svg viewBox="0 0 26 26" className="h-[26px] w-[26px]" fill="none"><rect width="26" height="26" rx="5" fill="#333436" /><circle cx="13" cy="13" r="8" stroke="#d6d6d6" strokeWidth="1.800" /><circle cx="13" cy="13" r="9.500" stroke="#d6d6d6" strokeWidth="1.500" strokeDasharray="1.500 1.500" /><path d="m13 12-3-6M13 13h7M13 14l-3 6" stroke="#d6d6d6" strokeWidth="1.500" /><circle cx="13" cy="13" r="2.500" fill="#333436" stroke="#d6d6d6" /></svg>
      </Cell>
      <Cell><FinderLogo className="h-[26px] w-[26px]" /><Dot /></Cell>
      <Cell>
        <svg viewBox="0 0 28 26" className="h-[26px] w-7" fill="none"><rect width="26" height="26" rx="5" fill="#414145" /><path d="M4 9V5q0-1 1-1h4M17 4h4q1 0 1 1v4M4 17v4q0 1 1 1h4" stroke="#eee" strokeWidth="1.800" /><path d="M7 10h3l1.500-2h4l1.500 2h2v7H7z" fill="#f3f3f3" /><circle cx="13" cy="13" r="2.500" fill="#555" /><circle cx="20" cy="20" r="6" fill="#202c38" stroke="#bdbdbd" strokeWidth="2" /><circle cx="20" cy="20" r="2.500" fill="#5e9bdd" /></svg><Dot />
      </Cell>
      <Cell><span className="flex h-[26px] w-[26px] items-center justify-center rounded-[5px] bg-[#333436]"><CodeLogo className="h-[18px] w-[18px]" /></span><Dot /></Cell>
    </div>
  );
}

export default function App() {
  return (
    <div className="relative flex h-[768px] w-[1366px] flex-col overflow-hidden bg-white font-['Noto_Sans','Liberation_Sans',sans-serif] text-[#0f141a]">
      <TabStrip />
      <AddressBar />
      <ConsoleNav />
      <Breadcrumbs />
      <div className="flex h-[563px] bg-[#fcfcfd]">
        <Sidebar />
        <Main />
      </div>
      <Footer />
      <Taskbar />
      <Dock />
      <svg viewBox="0 0 14 20" className="absolute left-[879px] top-[521px] h-5 w-[14px]" fill="#fff" stroke="#15191d" strokeWidth="1.200"><path d="M2.200 1.500v15l3.500-3.200 2.300 4.800 2.300-1-2.100-4.700h4.700z" /></svg>
    </div>
  );
}
